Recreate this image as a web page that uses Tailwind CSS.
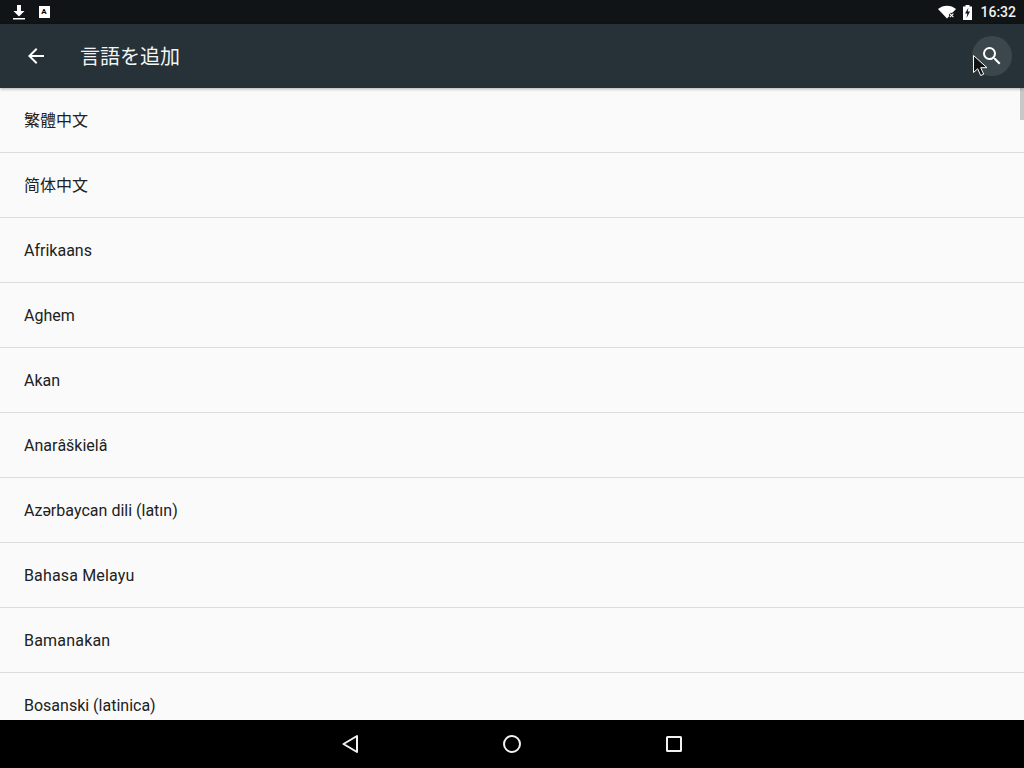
<!DOCTYPE html>
<html lang="ja">
<head>
  <meta charset="UTF-8" />
  <title>言語を追加</title>
  <script src="https://cdn.jsdelivr.net/npm/@tailwindcss/browser@4"></script>
</head>
<body class="w-[1024px] h-[768px] overflow-hidden flex flex-col bg-[#fafafa] font-['Roboto','Noto_Sans_CJK_JP',sans-serif]">

  <!-- status bar -->
  <div class="h-6 shrink-0 bg-[#101416] flex items-center text-white">
    <div class="w-[38px] flex justify-center">
      <svg width="14" height="16" viewBox="0 0 14 16" fill="#fff"><path d="M5 1h4v6h3.500L7 12.500 1.500 7H5z"/><rect x="1" y="14" width="12" height="1.500"/></svg>
    </div>
    <div class="w-3 flex justify-center">
      <div class="w-[11px] h-3 bg-white flex items-center justify-center text-[8px] leading-none font-bold text-black">A</div>
    </div>
    <div class="flex-1"></div>
    <svg width="18" height="14" viewBox="0 0 18 14" fill="#fff"><path d="M0 4C5-0.500 13-0.500 18 4L9 13.500z"/><path d="M12 9l4 4M16 9l-4 4" stroke="#101416" stroke-width="3.500" transform="translate(1 0.500) scale(.9)"/><path d="M12 9l4 4M16 9l-4 4" stroke="#fff" stroke-width="1.200" transform="translate(1 0.500) scale(.9)"/></svg>
    <svg class="ml-[7px]" width="9" height="15" viewBox="0 0 9 15"><path d="M0 1.500h2.500V0h4v1.500H9V15H0z" fill="#fff"/><path d="M5.500 2.500L2 8.500h2.300l-.8 4.500 3.500-6.500H4.700z" fill="#101416"/></svg>
    <span class="ml-2 mr-2 text-sm leading-none font-medium text-[#f1f1f1]">16:32</span>
  </div>

  <!-- toolbar -->
  <div class="relative z-10 h-16 shrink-0 bg-[#263238] flex items-center shadow-[0_1px_3px_rgba(0,0,0,0.3)] text-white">
    <div class="w-[72px] pl-6 flex items-center">
      <svg width="24" height="24" viewBox="0 0 24 24" fill="#fff"><path d="M20 11H7.830l5.590-5.590L12 4l-8 8 8 8 1.410-1.410L7.830 13H20z"/></svg>
    </div>
    <span class="ml-2 pt-0.5 text-xl leading-none text-[#f3f4f4]">言語を追加</span>
    <div class="flex-1"></div>
    <div class="relative w-10 h-10 mr-3 rounded-full bg-white/10 flex items-center justify-center">
      <svg width="24" height="24" viewBox="0 0 24 24" fill="#fff"><path d="M15.500 14h-.79l-.28-.27A6.470 6.470 0 0 0 16 9.500 6.500 6.500 0 1 0 9.500 16c1.610 0 3.090-.59 4.230-1.570l.27.28v.79l5 4.990L20.490 19l-4.990-5zm-6 0C7.010 14 5 11.990 5 9.500S7.010 5 9.500 5 14 7.010 14 9.500 11.990 14 9.500 14z"/></svg>
      <svg class="absolute left-0 top-[18px]" width="17" height="24" viewBox="0 0 17 24"><path d="M1.500 1.500v17l4.200-3.700 3 6.700 3-1.300-3-6.500H15z" fill="#111" stroke="#fff" stroke-width="1"/></svg>
    </div>
  </div>

  <!-- language list -->
  <div class="relative flex-1 overflow-hidden">
    <div class="absolute right-0 top-0 w-1 h-8 bg-black/20"></div>
    <ul class="text-base text-[#212121] [font-kerning:none]">
      <li class="h-[65px] pl-6 pt-0.5 flex items-center border-b border-[#dcdcdc]">繁體中文</li>
      <li class="h-[65px] pl-6 pt-0.5 flex items-center border-b border-[#dcdcdc]">简体中文</li>
      <li class="h-[65px] pl-6 pt-0.5 flex items-center border-b border-[#dcdcdc]">Afrikaans</li>
      <li class="h-[65px] pl-6 pt-0.5 flex items-center border-b border-[#dcdcdc]">Aghem</li>
      <li class="h-[65px] pl-6 pt-0.5 flex items-center border-b border-[#dcdcdc]">Akan</li>
      <li class="h-[65px] pl-6 pt-0.5 flex items-center border-b border-[#dcdcdc]">Anarâškielâ</li>
      <li class="h-[65px] pl-6 pt-0.5 flex items-center border-b border-[#dcdcdc]">Azərbaycan dili (latın)</li>
      <li class="h-[65px] pl-6 pt-0.5 flex items-center border-b border-[#dcdcdc] tracking-[0.15px]">Bahasa Melayu</li>
      <li class="h-[65px] pl-6 pt-0.5 flex items-center border-b border-[#dcdcdc] tracking-[0.2px]">Bamanakan</li>
      <li class="h-[65px] pl-6 pt-0.5 flex items-center border-b border-[#dcdcdc]">Bosanski (latinica)</li>
    </ul>
  </div>

  <!-- nav bar -->
  <div class="h-12 shrink-0 bg-black relative flex items-center justify-center gap-[138px]">
    <svg width="24" height="24" viewBox="0 0 24 24" fill="none" stroke="#f2f2f2" stroke-width="2" stroke-linejoin="round"><path d="M19 4v16L5.500 12z"/></svg>
    <svg width="24" height="24" viewBox="0 0 24 24" fill="none" stroke="#f2f2f2" stroke-width="2"><circle cx="12" cy="12" r="8"/></svg>
    <svg width="24" height="24" viewBox="0 0 24 24" fill="none" stroke="#f2f2f2" stroke-width="2" stroke-linejoin="round"><rect x="5" y="5" width="14" height="14" rx="0.500"/></svg>
  </div>

</body>
</html>
